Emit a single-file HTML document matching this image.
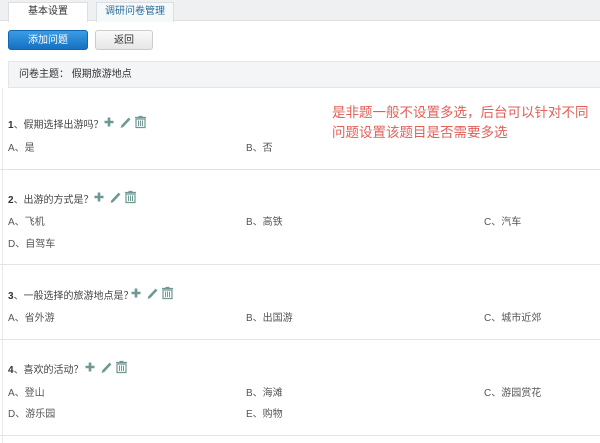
<!DOCTYPE html>
<html><head><meta charset="utf-8"><style>
*{margin:0;padding:0;box-sizing:border-box}
body{width:600px;height:443px;background:#fff;font-family:"Liberation Sans","Noto Sans CJK SC",sans-serif;font-size:10px;color:#555;position:relative;overflow:hidden}
.a{position:absolute;white-space:nowrap}
.topbar{position:absolute;left:0;top:0;width:600px;height:21px;background:#eef0f1;border-bottom:1px solid #dcdfe1}
.tab{position:absolute;top:2px;height:20px;background:#fff;border:1px solid #dcdfe1;border-bottom:none;text-align:center;line-height:18px;font-size:10px}
.btn{position:absolute;top:30px;height:20px;border-radius:3px;text-align:center;line-height:20px;font-size:10px}
.sep{position:absolute;left:0;width:600px;height:1px;background:#e2e4e6}
.q{font-size:10px;color:#444}
.q b{font-weight:bold;color:#333}
.ic{position:absolute}
</style></head><body>
<div class="topbar"></div>
<div class="tab" style="left:8px;width:80px;color:#333">基本设置</div>
<div class="tab" style="left:96px;width:78px;color:#2a6c9a;background:#f6f9fa">调研问卷管理</div>
<div class="btn" style="left:8px;width:80px;background:linear-gradient(#3a9de4,#1670c2);color:#fff;border:1px solid #1566b0">添加问题</div>
<div class="btn" style="left:95px;width:58px;background:linear-gradient(#fafafa,#e6e6e6);border:1px solid #ccc;color:#333">返回</div>
<div class="a" style="left:8px;top:61px;width:592px;height:27px;background:#f4f5f6;border:1px solid #e3e5e7;border-right:none;line-height:25px;padding-left:10px;color:#333">问卷主题： 假期旅游地点</div>
<div class="a" style="left:332px;top:103px;color:#e0605a;font-size:13.5px;line-height:20px">是非题一般不设置多选，后台可以针对不同<br>问题设置该题目是否需要多选</div>
<div style="position:absolute;left:2px;top:88px;width:1px;height:355px;background:#e6e8ea"></div>

<div class="sep" style="top:169px"></div>
<div class="sep" style="top:264px"></div>
<div class="sep" style="top:339px"></div>
<div class="sep" style="top:435px"></div>

<div class="a q" style="left:8px;top:116px"><b>1</b>、假期选择出游吗？</div>
<div class="a" style="left:8px;top:139px">A、是</div>
<div class="a" style="left:246px;top:139px">B、否</div>

<div class="a q" style="left:8px;top:191px"><b>2</b>、出游的方式是？</div>
<div class="a" style="left:8px;top:213px">A、飞机</div>
<div class="a" style="left:246px;top:213px">B、高铁</div>
<div class="a" style="left:484px;top:213px">C、汽车</div>
<div class="a" style="left:8px;top:235px">D、自驾车</div>

<div class="a q" style="left:8px;top:287px"><b>3</b>、一般选择的旅游地点是？</div>
<div class="a" style="left:8px;top:309px">A、省外游</div>
<div class="a" style="left:246px;top:309px">B、出国游</div>
<div class="a" style="left:484px;top:309px">C、城市近郊</div>

<div class="a q" style="left:8px;top:361px"><b>4</b>、喜欢的活动？</div>
<div class="a" style="left:8px;top:384px">A、登山</div>
<div class="a" style="left:246px;top:384px">B、海滩</div>
<div class="a" style="left:484px;top:384px">C、游园赏花</div>
<div class="a" style="left:8px;top:405px">D、游乐园</div>
<div class="a" style="left:246px;top:405px">E、购物</div>

<svg width="0" height="0" style="position:absolute"><defs>
<g id="icons">
<path d="M0.5 7h9M5 2.5v9" stroke="#6d9893" stroke-width="2.6"/>
<path d="M18 11.5l7.5-8" stroke="#6d9893" stroke-width="2.6"/><path d="M16.5 13l1-2.6 1.6 1.6z" fill="#6d9893"/>
<path d="M31 2.5h11M34.5 1.5h4" stroke="#6d9893" stroke-width="1.3"/>
<path d="M32 4h9v8.5h-9z" stroke="#6d9893" stroke-width="1.2" fill="none"/>
<path d="M34.5 5.5v5.5M36.5 5.5v5.5M38.5 5.5v5.5" stroke="#6d9893" stroke-width="1"/>
</g></defs></svg>
<svg class="ic" style="left:104px;top:115px" width="46" height="14"><use href="#icons"/></svg>
<svg class="ic" style="left:94px;top:190px" width="46" height="14"><use href="#icons"/></svg>
<svg class="ic" style="left:131px;top:286px" width="46" height="14"><use href="#icons"/></svg>
<svg class="ic" style="left:85px;top:360px" width="46" height="14"><use href="#icons"/></svg>
</body></html>
